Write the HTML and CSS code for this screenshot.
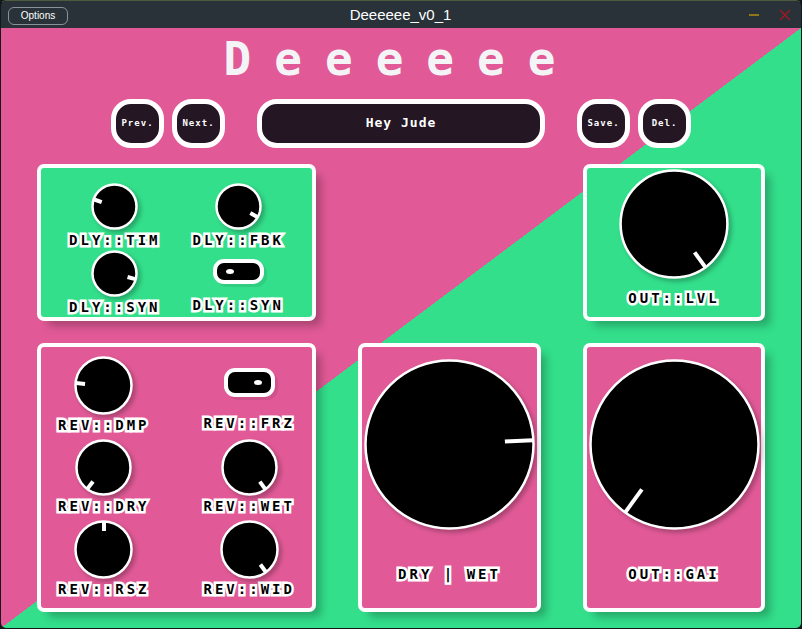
FILE: index.html
```html
<!DOCTYPE html>
<html lang="en">
<head>
<meta charset="utf-8">
<title>Deeeeee_v0_1</title>
<link rel="stylesheet" href="styles.css">
</head>
<body>
<div class="window">
  <header class="titlebar">
    <div class="titlebar-side"><button class="options" type="button">Options</button></div>
    <div class="titlebar-name">Deeeeee_v0_1</div>
    <div class="titlebar-side titlebar-actions">
      <button class="win-button" type="button" aria-label="Minimise"><svg width="12" height="12" viewBox="0 0 12 12"><path d="M1 6h10" stroke="#917618" stroke-width="2"/></svg></button>
      <button class="win-button" type="button" aria-label="Close"><svg width="12" height="12" viewBox="0 0 12 12"><path d="M1 1l10 10M11 1L1 11" stroke="#981a22" stroke-width="1.6"/></svg></button>
    </div>
  </header>
  <main class="plugin">
    <h1 class="brand">Deeeeee</h1>
    <nav class="presets">
      <div class="preset-pair">
        <button class="pill" type="button">Prev.</button>
        <button class="pill" type="button">Next.</button>
      </div>
      <button class="pill pill-name" type="button">Hey Jude</button>
      <div class="preset-pair">
        <button class="pill" type="button">Save.</button>
        <button class="pill" type="button">Del.</button>
      </div>
    </nav>
    <div class="panels">
      <section class="panel panel-green panel-delay">
        <label class="control"><span class="knob"><svg width="47" height="47" viewBox="0 0 47 47"><circle cx="23.5" cy="23.5" r="22"/><path d="M23.5 2v8" transform="rotate(-71 23.5 23.5)"/></svg><input type="range"></span><span class="caption">DLY::TIM</span></label>
        <label class="control"><span class="knob"><svg width="47" height="47" viewBox="0 0 47 47"><circle cx="23.5" cy="23.5" r="22"/><path d="M23.5 2v8" transform="rotate(119 23.5 23.5)"/></svg><input type="range"></span><span class="caption">DLY::FBK</span></label>
        <label class="control"><span class="knob"><svg width="47" height="47" viewBox="0 0 47 47"><circle cx="23.5" cy="23.5" r="22"/><path d="M23.5 2v8" transform="rotate(105 23.5 23.5)"/></svg><input type="range"></span><span class="caption">DLY::SYN</span></label>
        <label class="control"><span class="switch"><input type="checkbox"></span><span class="caption">DLY::SYN</span></label>
      </section>
      <section class="panel panel-green panel-level">
        <label class="control"><span class="knob"><svg width="110" height="110" viewBox="0 0 110 110"><circle cx="55" cy="55" r="53.4"/><path d="M55 2v18" transform="rotate(144 55 55)"/></svg><input type="range"></span><span class="caption">OUT::LVL</span></label>
      </section>
      <section class="panel panel-pink panel-reverb">
        <label class="control"><span class="knob"><svg width="59" height="59" viewBox="0 0 59 59"><circle cx="29.5" cy="29.5" r="28"/><path d="M29.5 2v9" transform="rotate(-85 29.5 29.5)"/></svg><input type="range"></span><span class="caption">REV::DMP</span></label>
        <label class="control"><span class="switch switch-tall"><input type="checkbox" checked></span><span class="caption">REV::FRZ</span></label>
        <label class="control"><span class="knob"><svg width="57" height="57" viewBox="0 0 57 57"><circle cx="28.5" cy="28.5" r="27"/><path d="M28.5 2v9" transform="rotate(-143 28.5 28.5)"/></svg><input type="range"></span><span class="caption">REV::DRY</span></label>
        <label class="control"><span class="knob"><svg width="57" height="57" viewBox="0 0 57 57"><circle cx="28.5" cy="28.5" r="27"/><path d="M28.5 2v9" transform="rotate(144 28.5 28.5)"/></svg><input type="range"></span><span class="caption">REV::WET</span></label>
        <label class="control"><span class="knob"><svg width="59" height="59" viewBox="0 0 59 59"><circle cx="29.5" cy="29.5" r="28"/><path d="M30 2v9"/></svg><input type="range"></span><span class="caption">REV::RSZ</span></label>
        <label class="control"><span class="knob"><svg width="59" height="59" viewBox="0 0 59 59"><circle cx="29.5" cy="29.5" r="28"/><path d="M29.5 2v9" transform="rotate(144 29.5 29.5)"/></svg><input type="range"></span><span class="caption">REV::WID</span></label>
      </section>
      <section class="panel panel-pink panel-large">
        <label class="control"><span class="knob"><svg width="171" height="171" viewBox="0 0 171 171"><circle cx="85.5" cy="85.5" r="84"/><path d="M85.5 2v28" transform="rotate(87 85.5 85.5)"/></svg><input type="range"></span><span class="caption">DRY | WET</span></label>
      </section>
      <section class="panel panel-pink panel-large">
        <label class="control"><span class="knob"><svg width="171" height="171" viewBox="0 0 171 171"><circle cx="85.5" cy="85.5" r="84"/><path d="M85.5 2v28" transform="rotate(-144 85.5 85.5)"/></svg><input type="range"></span><span class="caption">OUT::GAI</span></label>
      </section>
    </div>
  </main>
</div>
</body>
</html>
```
FILE: styles.css
```css
:root {
  --pink: #e15a97;
  --green: #33df8b;
  --ink: #241623;
  --paper: #f4f4f6;
  --mono: "DejaVu Sans Mono", monospace;
}

* {
  box-sizing: border-box;
}

body {
  margin: 0;
  background: #12181b;
  font-family: var(--mono);
}

button {
  cursor: pointer;
}

.window {
  display: flex;
  flex-direction: column;
  min-height: 100vh;
  overflow: hidden;
  border: 1px solid #12181b;
  border-top-color: #4d5b3c;
  border-radius: 6px;
}

/* Title bar */
.titlebar {
  display: flex;
  align-items: center;
  height: 27px;
  padding: 2px 8px 0 7px;
  background: #283238;
  color: #fff;
  font-family: "Liberation Sans", sans-serif;
}

.titlebar-side {
  display: flex;
  flex: 1;
}

.titlebar-actions {
  justify-content: flex-end;
  gap: 15px;
}

.titlebar-name {
  padding-bottom: 2px;
  font-size: 15px;
  line-height: 20px;
}

.options {
  width: 60px;
  height: 18px;
  padding: 0;
  border: 1px solid #87929a;
  border-radius: 6px;
  background: transparent;
  color: #fff;
  font: 10px/14px "Liberation Sans", sans-serif;
}

.win-button {
  display: flex;
  align-items: center;
  justify-content: center;
  width: 16px;
  height: 20px;
  padding: 0 0 2px;
  border: 0;
  background: transparent;
}

/* Plugin surface */
.plugin {
  display: flex;
  flex: 1;
  flex-direction: column;
  padding: 0 36px 16px;
  background: linear-gradient(to bottom right, var(--pink) 50%, var(--green) 50%);
}

.brand {
  margin: 0;
  padding: 1px 0 10px;
  color: var(--paper);
  font-size: 46px;
  line-height: 60px;
  letter-spacing: 23px;
  text-align: center;
}

.presets {
  display: flex;
  justify-content: center;
  gap: 32px;
  margin-bottom: 16px;
}

.preset-pair {
  display: flex;
  gap: 8px;
}

.pill {
  width: 53px;
  height: 49px;
  padding: 0 0 2px;
  border: 5px solid #fff;
  border-radius: 20px;
  background: var(--ink);
  color: #fff;
  font: bold 9px/16px var(--mono);
  letter-spacing: 1px;
}

.pill-name {
  flex: 0 1 288px;
  font-size: 13px;
}

/* Panels */
.panels {
  display: grid;
  flex: 1;
  grid-template-columns: minmax(0, 279fr) minmax(0, 183fr) minmax(0, 182fr);
  grid-template-rows: 157fr 269fr;
  gap: 22px 42px;
}

.panel {
  display: grid;
  align-content: start;
  justify-content: center;
  border: 4px solid #fff;
  border-radius: 7px;
  box-shadow: 8px 8px 8px -3px rgba(0, 0, 0, 0.25);
}

.panel-green {
  background: var(--green);
}

.panel-pink {
  background: var(--pink);
}

.panel-delay {
  grid-template-columns: auto auto;
  column-gap: 32px;
  padding-top: 15px;
}

.panel-level {
  grid-column: 3;
  padding-top: 1px;
}

.panel-level .control {
  gap: 9px;
}

.panel-reverb {
  grid-template-columns: auto auto;
  gap: 4px 54px;
  padding-top: 9px;
}

.panel-large {
  padding-top: 12px;
}

.panel-large .control {
  gap: 34px;
}

/* Controls */
.control {
  display: flex;
  flex-direction: column;
  align-items: center;
}

.knob {
  position: relative;
  display: flex;
}

.knob svg {
  overflow: visible;
  filter: drop-shadow(3px 3px 2px rgba(0, 0, 0, 0.25));
}

.knob circle {
  fill: #000;
  stroke: #fff;
  stroke-width: 2.5;
}

.knob path {
  stroke: #fff;
  stroke-width: 4;
}

.knob input {
  position: absolute;
  inset: 0;
  width: 100%;
  height: 100%;
  margin: 0;
  opacity: 0;
}

.switch {
  display: flex;
  padding: 9px 0 11px;
}

.switch input {
  display: flex;
  align-items: center;
  width: 51px;
  height: 25px;
  margin: 0;
  padding: 0 9px;
  border: 4px solid #fff;
  border-radius: 11px;
  appearance: none;
  background: #000;
  box-shadow: 3px 3px 0 rgba(0, 0, 0, 0.08);
}

.switch input::before {
  width: 8px;
  height: 5px;
  border-radius: 50%;
  background: #fff;
  content: "";
}

.switch input:checked {
  justify-content: flex-end;
}

.switch-tall {
  padding: 12px 0 16px;
}

.switch-tall input {
  height: 29px;
}

.caption {
  color: #000;
  font-size: 14px;
  font-weight: bold;
  line-height: 20px;
  letter-spacing: 3px;
  white-space: pre;
  -webkit-text-stroke: 5px #fff;
  paint-order: stroke fill;
}
```
